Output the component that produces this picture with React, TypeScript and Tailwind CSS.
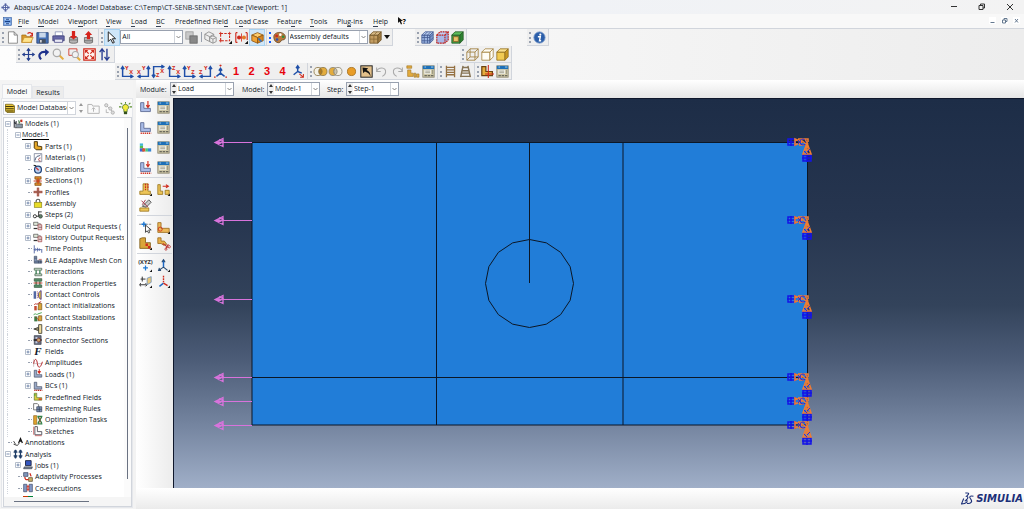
import type { ReactNode } from "react";
import clsx from "clsx";

const gold = "#e3ac3d";
const blue = "#1f4fa8";
const red = "#cf2a1c";

/* L-shaped bracket used by most of the part, load and BC icons */
const bracket = (fill = "#a9bbe6", stroke = "#55648f") => (
  <path d="M2 2h4v7h8v4H2z" fill={fill} stroke={stroke} strokeWidth="1" />
);

const axes = (a: string, b: string, path: string, ax: number, ay: number, bx: number, by: number) => (
  <>
    <path d={path} fill="none" stroke={blue} strokeWidth="1.8" />
    <text x={ax} y={ay} fontSize="7" fontWeight="700" fill={red}>{a}</text>
    <text x={bx} y={by} fontSize="7" fontWeight="700" fill={red}>{b}</text>
  </>
);

const upRight = "M2 2v12h12M0 5l2-3 2 3M11.500 12l3 2-3 2";
const upLeft = "M14 2v12H2M12 5l2-3 2 3M4.500 12l-3 2 3 2";
const downRight = "M2 15V2h12M0 12l2 3 2-3M11.500 0l3 2-3 2";

const cube = (front: string, top: string, side: string, stroke: string) => (
  <g stroke={stroke} strokeWidth="1" strokeLinejoin="round">
    <path d="M1 5h10v10H1z" fill={front} />
    <path d="M1 5l4-4h10l-4 4z" fill={top} />
    <path d="M11 5l4-4v10l-4 4z" fill={side} />
  </g>
);

const icons: Record<string, ReactNode> = {
  app: (
    <g fill="none" stroke="#4d5c9e" strokeWidth="1.600">
      <circle cx="8" cy="8" r="4.500" />
      <path d="M8 1v14M1 8h14" />
      <path d="M6 2h4M6 14h4M2 6v4M14 6v4" />
    </g>
  ),
  doc: (
    <>
      <rect x="1" y="1" width="14" height="14" fill="#6f9fe2" stroke="#2c559e" />
      <path d="M3 3h10v2H3zM3 7h10v2H3zM3 11h10v2H3z" fill="#fff" />
      <path d="M5 4h6M3 8h10M5 12h6" stroke="#173f86" strokeWidth="2" />
    </>
  ),
  file: <path d="M3 1h7l4 4v10H3zM10 1v4h4" fill="#fff" stroke="#777" />,
  open: (
    <>
      <path d="M1 14V5h5l1 2h6v7z" fill="#d9992b" stroke="#a9741a" />
      <path d="M1 14l3-6h11l-3 6z" fill="#ffe48c" stroke="#c79432" />
      <path d="M8 3c3-2 5-1 6 2M14 2v4h-3" fill="none" stroke={red} strokeWidth="1.500" />
    </>
  ),
  save: (
    <>
      <path d="M1 2h14v13H1z" fill="#4570b5" stroke="#2b4478" />
      <path d="M4 2h8v6H4z" fill="#c9d8ea" />
      <path d="M4 10h8v5H4z" fill="#444f60" />
      <path d="M5 11h2v3H5z" fill="#ddd" />
    </>
  ),
  print: (
    <>
      <path d="M4 1h9v5H4z" fill="#fff" stroke="#8890b5" />
      <path d="M1 6h14v6H1z" fill="#6768a8" stroke="#3f3f77" />
      <path d="M3 10h10v4H3z" fill="#e8e8f4" stroke="#55558e" />
    </>
  ),
  importDb: (
    <>
      <path d="M3 8h10v6c-2 1.500-8 1.500-10 0z" fill="#b5b5b5" stroke="#666" />
      <path d="M3 11h10" stroke="#666" />
      <path d="M6 0h4v6h2.500L8 10.500 3.500 6H6z" fill="#d6231b" />
    </>
  ),
  exportDb: (
    <>
      <path d="M3 8h10v6c-2 1.500-8 1.500-10 0z" fill="#b5b5b5" stroke="#666" />
      <path d="M3 12h10" stroke="#666" />
      <path d="M6 10h4V5h2.500L8 0 3.500 5H6z" fill="#d6231b" />
    </>
  ),
  cursor: <path d="M4 1v12l3-3 2.500 5 2-1L9 9.500h4z" fill="#fff" stroke="#222" strokeWidth="1.200" />,
  overlap: (
    <>
      <rect x="1" y="1" width="9" height="9" fill="#c9c9c9" stroke="#999" />
      <rect x="6" y="6" width="9" height="9" fill="#888" stroke="#666" />
    </>
  ),
  cubesGray: (
    <g fill="#eee" stroke="#888">
      <path d="M1 4l5-3 6 3v6l-5 3-6-3z" />
      <path d="M1 4l6 3 5-3M7 7v6" />
      <path d="M7 8l4-2 4 2v5l-4 2-4-2z" />
      <path d="M7 8l4 2 4-2M11 10v5" />
    </g>
  ),
  selectRect: (
    <>
      <path d="M2 3h11v9H2z" fill="none" stroke={red} strokeDasharray="3 1.500" strokeWidth="1.300" />
      <path d="M0 3h4M2 1v4M11 3h4M13 1v4M0 12h4M2 10v4" stroke={red} />
      <path d="M12 16h4v-4z" fill="#111" />
    </>
  ),
  selectDots: (
    <>
      <path d="M1 2v12M15 2v9M1 2h2M1 14h2M13 2h2" stroke={red} strokeWidth="1.400" />
      <circle cx="5" cy="8" r="2.500" fill={red} />
      <circle cx="11" cy="8" r="2.500" fill="#e37a28" />
      <path d="M8 3v10" stroke={red} />
      <path d="M12 16h4v-4z" fill="#111" />
    </>
  ),
  cubeOrange: (
    <g stroke="#8d5410">
      <path d="M1 5l7-3 7 3-7 3z" fill="#ffcb6a" />
      <path d="M1 5l7 3v7l-7-3z" fill="#f1a436" />
      <path d="M15 5L8 8v7l7-3z" fill="#d78620" />
      <path d="M9 9l4 4" stroke="#2d6fc4" strokeWidth="2" />
    </g>
  ),
  palette: (
    <>
      <path d="M1 7c0-4 5-6 9-5s6 4 5 7-4 1-5 3-2 3-5 2-4-4-4-7z" fill="#b97b3c" stroke="#6a431c" />
      <circle cx="4.500" cy="6" r="1.800" fill={red} />
      <circle cx="9" cy="4.500" r="1.600" fill="#fff" />
      <circle cx="12.500" cy="7" r="1.600" fill="#2f8c3a" />
      <circle cx="5" cy="10.500" r="1.600" fill="#2c51b5" />
    </>
  ),
  cubeBrown: (
    <>
      {cube("#c39d62", "#d8bb88", "#a17c42", "#6f5428")}
      <path d="M6 5v10M1 10h10l4-4M6 5l4-4" fill="none" stroke="#8a6a36" />
    </>
  ),
  cubeMesh: (
    <>
      {cube("#9eb7e2", "#bdd0f0", "#7d98cd", "#445b93")}
      <path d="M4 5v10M8 5v10M1 8h10l4-4M1 12h10l4-4M4 5l4-4M8 5l4-4" stroke="#445b93" fill="none" />
    </>
  ),
  cubeRed: (
    <>
      {cube("#a9b8e8", "#c3cdf0", "#98a8dc", "#98a8dc")}
      <path d="M1 5h10v10H1zM1 5l4-4h10v10l-4 4M11 5l4-4" fill="none" stroke={red} strokeWidth="1.500" strokeDasharray="2 1" />
    </>
  ),
  cubeGreen: (
    <>
      {cube("#3fa043", "#5bbd5b", "#2c8331", "#275c28")}
      <path d="M3 7h6v6H3z" fill="#e9c46a" stroke="#8b5d24" />
    </>
  ),
  info: (
    <>
      <circle cx="8" cy="8" r="7" fill="#2b5ea9" stroke="#8ea9d2" />
      <circle cx="9" cy="4.500" r="1.300" fill="#fff" />
      <path d="M6 7h3l-1 5h2" fill="none" stroke="#fff" strokeWidth="1.700" />
    </>
  ),
  move: (
    <path
      d="M8 1v14M1 8h14M6 3.500L8 1l2 2.500M6 12.500L8 15l2-2.500M3.500 6L1 8l2.500 2M12.500 6L15 8l-2.500 2"
      fill="none"
      stroke="#26408f"
      strokeWidth="1.500"
    />
  ),
  rotate: (
    <>
      <path d="M5 14C0 8 5 4 11 5" fill="none" stroke="#1e318c" strokeWidth="2.600" />
      <path d="M10 1l5 4-5 5z" fill="#1e318c" />
    </>
  ),
  zoom: (
    <>
      <path d="M9 9l5 5" stroke={gold} strokeWidth="2.500" />
      <circle cx="6" cy="6" r="4.500" fill="#f2f2f2" stroke="#aaa" strokeWidth="1.500" />
    </>
  ),
  zoomBox: (
    <>
      <path d="M1 1h10v8H1z" fill="none" stroke={red} />
      <path d="M11 11l4 4" stroke={gold} strokeWidth="2.500" />
      <circle cx="9" cy="8" r="3.800" fill="#f2f2f2" stroke="#aaa" strokeWidth="1.300" />
    </>
  ),
  fit: (
    <>
      <path d="M1 1h14v14H1z" fill="#fff3ee" stroke={red} strokeWidth="1.500" />
      <path d="M3 3l4 4M13 3L9 7M3 13l4-4M13 13L9 9" stroke={red} strokeWidth="1.500" />
      <path d="M2.500 2.500h4l-4 4zM13.500 2.500h-4l4 4zM2.500 13.500v-4l4 4zM13.500 13.500v-4l-4 4z" fill={red} />
    </>
  ),
  upDown: (
    <path d="M5 15V2M2 5l3-4 3 4M11 1v13M8 11l3 4 3-4" fill="none" stroke="#2a3f94" strokeWidth="1.700" />
  ),
  xy: axes("Y", "X", upRight, 5, 6, 10, 11),
  yx: axes("Y", "X", upLeft, 6, 6, 0, 11),
  xz: axes("X", "Z", downRight, 10, 10, 5, 15),
  zx: axes("Z", "X", upRight, 5, 6, 10, 11),
  yz: axes("Y", "Z", upRight, 5, 6, 10, 11),
  zy: axes("Y", "Z", upLeft, 6, 6, 0, 11),
  triad: (
    <>
      <path d="M8 4v6l-5 4M8 10l5 4M6 7l2-3 2 3" fill="none" stroke={blue} strokeWidth="1.800" />
      <path d="M7 0l1 1 1-1M0 15h2M14 15h2" stroke={red} strokeWidth="1.500" fill="none" />
    </>
  ),
  triadArrow: (
    <>
      <path d="M7 1v7l-5 4M7 8l5 2M5 4l2-3 2 3" fill="none" stroke={blue} strokeWidth="1.800" />
      <path d="M9 11l5 4M14 11v4h-4" fill="none" stroke={red} strokeWidth="1.300" />
    </>
  ),
  unionL: (
    <g stroke="#8a7444">
      <circle cx="5" cy="8" r="5" fill="#f4f1e6" />
      <circle cx="11" cy="8" r="5" fill={gold} />
      <path d="M8 4a5 5 0 010 8 5 5 0 010-8z" fill="#b07a1d" />
    </g>
  ),
  unionR: (
    <g stroke="#8a8474">
      <circle cx="5" cy="8" r="5" fill={gold} />
      <circle cx="11" cy="8" r="5" fill="#f4f1e6" />
      <path d="M8 4a5 5 0 010 8 5 5 0 010-8z" fill="#c9c3ae" />
    </g>
  ),
  disc: <circle cx="8" cy="8" r="5" fill="#e89d28" stroke="#a36b15" />,
  undoCut: (
    <>
      <rect x="1" y="1" width="14" height="14" fill="#e3c08a" stroke="#222" strokeWidth="1.200" />
      <path d="M3 3l7 1-2 2c3 1 5 4 5 8-2-4-4-5-7-6l-2 2z" fill="#111" />
    </>
  ),
  undo: <path d="M2 3v5h5M2 8c2-6 12-6 11 1 0 3-2 4-4 5" fill="none" stroke="#a9a9a9" strokeWidth="1.300" />,
  redo: <path d="M14 3v5H9M14 8C12 2 2 2 3 9c0 3 2 4 4 5" fill="none" stroke="#a9a9a9" strokeWidth="1.300" />,
  parts: (
    <g fill={gold} stroke="#9c6f1d" strokeWidth=".7">
      <path d="M1 1h6v3H1zM2 6h4v4h3v4H2z" />
      <path d="M10 10h2v5h-2zM13 11h3v4h-3z" />
    </g>
  ),
  manager: (
    <>
      <rect x="1" y="1" width="14" height="14" fill="#cfc8a8" stroke="#8d8770" />
      <path d="M1 1h14v4H1z" fill="#1d70b8" />
      <path d="M3 2.500h2M11 2.500h3" stroke="#bfe0f4" />
      <path d="M3 6h8v5H3z" fill="#f6f6ef" />
      <path d="M4 7.500h6M4 9.500h6M13 6v5" stroke="#8f8c7b" />
      <path d="M3 13h3M7 13h3M11 13h3" stroke="#6b6a5d" strokeWidth="1.500" />
    </>
  ),
  ladder: <path d="M3 1v14M13 1v14M3 3h10M3 6h10M3 9h10M3 12h10" stroke="#957142" strokeWidth="1.600" />,
  ladder2: <path d="M5 1L2 15M11 1l3 14M5 3h6M4 7h8M3 10h10M3 14h10" stroke="#867456" strokeWidth="1.800" />,
  bracketCut: (
    <>
      <path d="M1 2h5v6h8v5H1z" fill={gold} stroke="#6b4310" strokeWidth="1.500" />
      <path d="M9 0v16M5 11h11" stroke={red} strokeWidth="1.300" />
    </>
  ),
  cubeWire: (
    <g fill="none" stroke="#9c7a38">
      <path d="M1 5h10v10H1zM5 1h10v10H5zM1 5l4-4M11 5l4-4M11 15l4-4M1 15l4-4" />
    </g>
  ),
  cubeHidden: cube("#fffdf5", "#fffdf5", "#fffdf5", "#a4823f"),
  cubeShaded: cube("#f2cb52", "#f9df8c", "#c9971f", "#94701f"),
  database: (
    <>
      <path d="M2 3h9l3 2v9H4l-2-2z" fill="#e8c637" stroke="#6c5a12" />
      <path d="M2 6h11M2 9h11M3 12h10" stroke="#44380a" strokeWidth="1.500" />
    </>
  ),
  folderUp: (
    <path d="M1 3h5l1 2h8v9H1zM8 12V7M6 9l2-2 2 2" fill="none" stroke="#b5b5b5" strokeWidth="1.200" />
  ),
  linkNodes: (
    <g fill="#ddd" stroke="#aaa">
      <path d="M4 4l8 8M4 9v4h3" fill="none" />
      <circle cx="4" cy="4" r="2" />
      <circle cx="9" cy="8" r="2" />
      <circle cx="12" cy="13" r="2" />
    </g>
  ),
  bulb: (
    <>
      <path d="M8 0v2M0 6h3M16 6h-3M2 1l2 2M14 1l-2 2" stroke="#5b8f2f" strokeWidth="1.300" />
      <path d="M8 3a3.500 3.500 0 00-2 6.500V12h4V9.500A3.500 3.500 0 008 3z" fill="#f4ec40" stroke="#4d7226" />
      <path d="M6 12h4v3H6z" fill="#32501d" />
    </>
  ),
  load: (
    <>
      {bracket()}
      <path d="M11 0v8M9 5l2 3 2-3" fill="none" stroke={red} strokeWidth="1.400" />
    </>
  ),
  bc: (
    <>
      {bracket()}
      <path d="M2 15h13" stroke={red} strokeWidth="2" strokeDasharray="1.500 1" />
    </>
  ),
  field: (
    <>
      <path d="M1 3h4v3H1z" fill="#3fb6d6" />
      <path d="M1 6h4v3H1z" fill="#56c04d" />
      <path d="M1 9h5v4H1z" fill="#3f62d0" />
      <path d="M4 9h4v4H4z" fill="#d8572f" />
      <path d="M8 9h3v4H8z" fill="#46c77e" />
      <path d="M11 9h4v4h-4z" fill="#3886d0" />
    </>
  ),
  loadCase: (
    <>
      {bracket()}
      <path d="M11 0v7M9 4l2 3 2-3" fill="none" stroke={red} strokeWidth="1.400" />
      <path d="M2 15h13" stroke={red} strokeWidth="2" strokeDasharray="1.500 1" />
    </>
  ),
  stamp: (
    <>
      <path d="M5 1h6v9h3v4H1v-4h4z" fill="#ecc558" stroke="#9a751c" />
      <path d="M8 1v8M11 1v7" stroke={red} strokeWidth="1.500" strokeDasharray="2 1" />
      <path d="M13 16h3v-3z" fill="#111" />
    </>
  ),
  translate: (
    <>
      <path d="M1 2h3v8h3v4H1zM10 9h5v5h-5z" fill="#ecc558" stroke="#9a751c" />
      <path d="M7 4h7M11 2l3 2-3 2" fill="none" stroke={red} strokeWidth="1.400" />
      <path d="M13 16h3v-3z" fill="#111" />
    </>
  ),
  eraser: (
    <>
      <path d="M1 11h11v4H1z" fill="#ecc558" stroke="#9a751c" />
      <path d="M4 9l8-8 3 3-6 6z" fill="#c9c9c9" stroke="#444" />
      <path d="M3 2l8 8M8 1l-4 6" stroke="#a13b4a" strokeWidth="1.200" />
    </>
  ),
  datumPick: (
    <>
      <path d="M0 4h16" stroke="#777" strokeDasharray="3 1" />
      <path d="M6 1v6M3 4h6" stroke="#1c78d4" strokeWidth="1.700" />
      <path d="M8 5v9l2-2 2 3 1-1-1-3h3z" fill="#fff" stroke="#222" />
    </>
  ),
  elbow: (
    <>
      <path d="M1 2h4v7h10v5H1z" fill="#ecb95a" stroke="#9a6a1c" />
      <circle cx="4" cy="10" r="2.500" fill="none" stroke={red} />
      <path d="M13 16h3v-3z" fill="#111" />
    </>
  ),
  cells: (
    <>
      <path d="M1 2l3-1h4v6h6v7H1z" fill="#d9a53a" stroke="#7d5a17" />
      <path d="M8 8h3v3H8zM11 11h3v3h-3z" fill={red} />
      <path d="M13 16h3v-3z" fill="#111" />
    </>
  ),
  scissors: (
    <>
      <path d="M1 1h4v4h4l3 4-4 1-3-2H1z" fill="#e8b04a" stroke="#9a6a1c" />
      <path d="M7 8l7 5M11 14l3-5" stroke="#b33" strokeWidth="1.300" />
      <circle cx="15" cy="12" r="1.500" fill="none" stroke="#b33" />
      <circle cx="11" cy="15" r="1.300" fill="none" stroke="#b33" />
    </>
  ),
  xyz: (
    <>
      <text x="-1" y="6" fontSize="7" fontWeight="700" fill="#333">(XYZ)</text>
      <path d="M8 8v6M5 11h6" stroke="#1c78d4" strokeWidth="1.500" />
      <path d="M13 16h3v-3z" fill="#111" />
    </>
  ),
  csys: (
    <>
      <path d="M8 1v9" stroke="#1c68c4" strokeWidth="1.800" />
      <path d="M8 10l-6 4M8 10l5 4M3 11l-1 3h3M6 4l2-3 2 3" fill="none" stroke="#274a72" strokeWidth="1.400" />
      <path d="M13 16h3v-3z" fill="#111" />
    </>
  ),
  plane: (
    <>
      <path d="M2 5h6M4 2v6M1 12h8M2 10l-1 2 1 2M8 10l2 2-2 2" fill="none" stroke="#333" strokeWidth="1.200" />
      <path d="M10 4l5-2v7l-5 3z" fill="#ecc979" stroke="#6b8fb8" />
      <path d="M13 16h3v-3z" fill="#111" />
    </>
  ),
  csysRed: (
    <>
      <path d="M8 1v9" stroke={red} strokeWidth="1.700" strokeDasharray="2 1" />
      <path d="M8 10l-5 4" stroke="#1c68c4" strokeWidth="1.800" />
      <path d="M8 10l5 3" stroke={red} strokeWidth="1.700" />
      <path d="M13 16h3v-3z" fill="#111" />
    </>
  ),
  models: (
    <>
      <path d="M2 1v13M2 5l3 3M5 3v11" stroke="#30343c" strokeWidth="1.700" fill="none" />
      <path d="M7 8h8v6H3" fill="#8a98a5" stroke="#333" />
      <path d="M9 2l1 5 2-5" fill="none" stroke="#4a7a4c" strokeWidth="1.500" />
      <path d="M12 1h3v4h-3z" fill={red} />
    </>
  ),
  part: <path d="M2 1h5v7l7 1v5H5L2 11z" fill="#e8a928" stroke="#4a340b" strokeWidth="1.500" />,
  material: (
    <>
      <path d="M2 1v13h12M2 1h12v13" fill="#fff" stroke="#55617c" />
      <path d="M3 12C6 2 8 7 12 3" fill="none" stroke="#36476d" strokeWidth="1.500" />
      <path d="M12 8c-4 0-4 5 0 5" fill="none" stroke="#a33" strokeWidth="1.500" />
    </>
  ),
  calibration: (
    <>
      <circle cx="8" cy="9" r="5.500" fill="#bcd1ee" stroke="#20447a" strokeWidth="2" />
      <path d="M5 6l4 4" stroke="#c33" strokeWidth="2" />
      <path d="M1 2l4 1" stroke="#222" strokeWidth="2" />
    </>
  ),
  section: (
    <>
      <path d="M3 1h10v4h-3v6h3v4H3v-4h3V5H3z" fill="#d6912d" stroke="#7a3f0b" />
      <path d="M1 8h13M8 3v10" stroke="#c8321f" strokeWidth="1.500" />
    </>
  ),
  profile: (
    <>
      <path d="M6 1h4v14H6z" fill="#c56a5c" />
      <path d="M1 6h14v4H1z" fill="#c56a5c" />
      <path d="M8 1v14M1 8h14" stroke="#4a4038" strokeDasharray="2 1" />
    </>
  ),
  assembly: (
    <>
      <path d="M5 8V5a3 3 0 016 0v3" fill="none" stroke="#555" strokeWidth="1.800" />
      <rect x="2" y="7" width="12" height="8" fill="#e8dc28" stroke="#86801a" />
    </>
  ),
  step: (
    <>
      <circle cx="3" cy="10" r="2.500" fill="#fff" stroke="#333" strokeWidth="1.500" />
      <circle cx="12" cy="10" r="3" fill="#5d7f66" stroke="#333" />
      <path d="M5 10h4M9 2v8M9 3h5" stroke="#333" strokeWidth="1.500" />
    </>
  ),
  output: (
    <>
      <path d="M1 2h7v5H1z" fill="#dfe7d8" stroke="#444" />
      <path d="M1 12h6" stroke="#333" strokeWidth="2" />
      <path d="M8 6h6v8H8z" fill="#e8d0d0" stroke="#933" />
      <path d="M9 10h5M9 4l4 1" stroke="#533" />
    </>
  ),
  time: <path d="M2 2v13M14 8v6M2 9h11M4 7L2 9l2 2M7 6v6M10 7v4" fill="none" stroke="#4a5fa0" strokeWidth="1.400" />,
  ale: (
    <>
      {bracket("#7e92b5", "#39455c")}
      <path d="M2 5h4M2 11h12M9 9v4M12 9v4" stroke="#39455c" />
      <path d="M9 7h5" stroke="#b66" strokeWidth="1.500" />
    </>
  ),
  interaction: (
    <>
      <path d="M2 2h12v3H2zM3 11h11v3H3z" fill="#d9e8d9" stroke="#2e4b35" />
      <path d="M5 5v6M11 5v6" stroke="#30784a" strokeWidth="2" />
    </>
  ),
  interactionProp: (
    <>
      <path d="M2 1h12v4H2zM2 11h12v4H2z" fill="#57906a" stroke="#2e4b35" />
      <path d="M5 5v6M11 5v6" stroke="#30784a" strokeWidth="2" />
      <path d="M1 8h14" stroke="#bb2b20" strokeWidth="1.500" />
    </>
  ),
  contact: (
    <>
      <path d="M1 2h4v12H1z" fill="#5268a4" />
      <path d="M13 1c-6 2-6 12 0 14z" fill="#d8bc3b" stroke="#59408c" strokeWidth="1.500" />
      <path d="M7 2v12" stroke="#a44" strokeDasharray="2 1" />
    </>
  ),
  contactInit: (
    <>
      <path d="M9 4h5v10H8z" fill="#d9a436" stroke="#704c12" />
      <path d="M2 8h4v7H2z" fill="#c34a33" />
      <path d="M2 6c3-4 4 2 7-3l4-2" fill="none" stroke="#b5281c" strokeWidth="1.500" />
    </>
  ),
  contactStab: (
    <>
      <path d="M9 6h5v8H8z" fill="#d9a436" stroke="#704c12" />
      <path d="M2 7h5v8H2z" fill="#3d7a45" />
      <path d="M1 5c3-5 4 1 7-2l6-2" fill="none" stroke="#43a14e" strokeWidth="1.500" />
      <path d="M4 8l6 5" stroke={red} />
    </>
  ),
  constraint: (
    <>
      <path d="M14 1v14H9V11L2 8l7-3V1z" fill="#f0dc9a" stroke="#3a3a30" strokeWidth="1.300" />
      <path d="M1 8h8M9 5v6" stroke="#333" strokeWidth="1.500" />
    </>
  ),
  connector: (
    <>
      <path d="M2 1h11v14H2z" fill="#6a7080" stroke="#2d3140" />
      <path d="M1 8h13" stroke="#111" strokeWidth="2" />
      <circle cx="9" cy="8" r="3" fill="#c9a46a" stroke="#7b2420" />
      <path d="M4 3h3v3H4zM4 10h3v3H4z" fill="#c2cbe0" />
    </>
  ),
  amplitude: (
    <>
      <path d="M1 2v12M1 9h14" stroke="#b9a0a0" />
      <path d="M1 9c2-10 5-8 6 0s5 8 8-3" fill="none" stroke="#b52a30" strokeWidth="1.600" />
    </>
  ),
  treeLoad: (
    <>
      {bracket("#9aa9c8", "#3c455c")}
      <path d="M10 0v7M8 4l2 3 2-3z" fill={red} stroke={red} strokeWidth="1.500" />
    </>
  ),
  treeBc: (
    <>
      {bracket("#9aa9c8", "#3c455c")}
      <path d="M2 15h13" stroke="#b92b22" strokeWidth="2" strokeDasharray="2 1" />
    </>
  ),
  predefined: (
    <>
      {bracket("#d9cf3f", "#4f6a2b")}
      <path d="M2 3h2v3H2z" fill="#4ba23f" />
      <path d="M9 10h5v3H9z" fill="#d0502d" />
    </>
  ),
  remesh: (
    <>
      <path d="M1 1h6l2 2v8H1z" fill="#fff" stroke="#333" />
      <path d="M6 6h8v8H6z" fill="#7f96b8" stroke="#26324a" />
      <path d="M10 6v8M6 10h8" stroke="#26324a" />
    </>
  ),
  optimize: (
    <>
      <path d="M1 1h5v14H1z" fill="#e0a32d" stroke="#8a611b" />
      <path d="M7 2h8M7 14h8M8 3l6 10M14 3L8 13" stroke="#2f8148" strokeWidth="2" />
      <path d="M11 3v10" stroke={red} />
    </>
  ),
  sketch: (
    <>
      <path d="M3 1h4v8h7v5H3z" fill="#fff" stroke="#4b4a55" strokeWidth="1.400" />
      <path d="M1 1v13M3 15.500h11" stroke="#b33" />
    </>
  ),
  annotation: (
    <>
      <path d="M1 5l3 5M1 10l6 2 3-4" fill="none" stroke="#222" strokeWidth="1.300" />
      <path d="M9 8l3-7 3 7M10 5h4" fill="none" stroke="#111" strokeWidth="2" />
    </>
  ),
  analysis: (
    <path
      d="M4 1v14M12 1v14M1 5h6M1 11h6M9 5h6M9 11h6M2 3l4 0M10 3h4M2 13h4M10 13h4"
      stroke="#1e3c66"
      strokeWidth="2"
    />
  ),
  job: (
    <>
      <path d="M4 1h9v8H4z" fill="#3456c0" stroke="#222a45" strokeWidth="1.500" />
      <path d="M2 11h13l-1 3H1z" fill="#7b8798" stroke="#2c3240" />
    </>
  ),
  adaptivity: (
    <>
      <path d="M1 1h7v6H1z" fill="#8197bb" stroke="#2a3550" />
      <path d="M9 9h6v6H9z" fill="#c9b06a" stroke="#4a3b1a" />
      <path d="M3 8c0 4 2 5 6 4M11 2l2 5" fill="none" stroke={red} strokeWidth="2" />
    </>
  ),
  coexec: (
    <>
      <path d="M1 2h5v12H1zM10 2h5v12h-5z" fill="#8297c4" stroke="#33405f" />
      <path d="M6 6h4M6 10h4M8 3v10" stroke={red} strokeWidth="1.500" />
    </>
  ),
};

function Icon({ name, className = "size-[14px]" }: { name: string; className?: string }) {
  return (
    <svg viewBox="0 0 16 16" className={clsx("shrink-0 overflow-visible", className)} aria-hidden="true">
      {icons[name]}
    </svg>
  );
}

function IconButton({ name, active, className }: { name: string; active?: boolean; className?: string }) {
  return (
    <button
      type="button"
      aria-label={name}
      className={clsx(
        "flex h-[15px] w-[14px] shrink-0 items-center justify-center",
        active && "bg-[#cfe6f8] outline outline-[#a9d2f0]",
        className
      )}
    >
      <Icon name={name} className="size-[13px]" />
    </button>
  );
}

function Grip({ color = "border-gray-400" }: { color?: string }) {
  return <span className={clsx("h-[11px] shrink-0 border-l-2 border-dotted", color)} />;
}

function Group({ className, children }: { className: string; children: ReactNode }) {
  return (
    <div className={clsx("flex h-full shrink-0 items-center justify-between border-r border-b border-gray-300 bg-[#efefef] px-[2px]", className)}>
      {children}
    </div>
  );
}

function Spinner({ fill }: { fill: string }) {
  return (
    <svg viewBox="0 0 6 12" className="h-3 w-[6px] shrink-0" aria-hidden="true">
      <path d="M1 4l2-3 2 3zM1 8l2 3 2-3z" fill={fill} />
    </svg>
  );
}

type ComboProps = { label: string; value: string; className: string; spinner?: boolean };

function Combo({ label, value, className, spinner }: ComboProps) {
  return (
    <span className={clsx("relative flex shrink-0 items-center bg-white", className)}>
      {spinner && (
        <span className="flex shrink-0 bg-[#f0f0f0]">
          <Spinner fill="#333" />
        </span>
      )}
      <select aria-label={label} className="h-3 w-full min-w-0 appearance-none bg-transparent pr-[7px] pl-px leading-3 text-clip outline-none">
        <option>{value}</option>
      </select>
      <svg viewBox="0 0 8 12" className="pointer-events-none absolute top-0 right-0 h-3 w-2">
        <path d="M.5 0v12" stroke="#d1d5db" />
        <path d="M2.500 5l2 2 2-2" fill="none" stroke="#666" strokeWidth=".8" />
      </svg>
    </span>
  );
}

type MenuItem = { pre?: string; key: string; post: string; width: string };

const menuItems: MenuItem[] = [
  { key: "F", post: "ile", width: "w-[20px]" },
  { key: "M", post: "odel", width: "w-[30px]" },
  { pre: "Vie", key: "w", post: "port", width: "w-[38px]" },
  { key: "V", post: "iew", width: "w-[25px]" },
  { key: "L", post: "oad", width: "w-[25px]" },
  { key: "B", post: "C", width: "w-[19px]" },
  { pre: "Predefined Fiel", key: "d", post: "", width: "w-[60px]" },
  { pre: "L", key: "o", post: "ad Case", width: "w-[42px]" },
  { pre: "Feat", key: "u", post: "re", width: "w-[33px]" },
  { key: "T", post: "ools", width: "w-[27px]" },
  { pre: "Plu", key: "g", post: "-ins", width: "w-[36px]" },
  { key: "H", post: "elp", width: "w-[25px]" },
];

type TreeNode = { label: string; level: 0 | 1 | 2; icon?: string; box?: "+" | "-"; current?: boolean };

const tree: TreeNode[] = [
  { label: "Models (1)", level: 0, icon: "models", box: "-" },
  { label: "Model-1", level: 1, box: "-", current: true },
  { label: "Parts (1)", level: 2, icon: "part", box: "+" },
  { label: "Materials (1)", level: 2, icon: "material", box: "+" },
  { label: "Calibrations", level: 2, icon: "calibration" },
  { label: "Sections (1)", level: 2, icon: "section", box: "+" },
  { label: "Profiles", level: 2, icon: "profile" },
  { label: "Assembly", level: 2, icon: "assembly", box: "+" },
  { label: "Steps (2)", level: 2, icon: "step", box: "+" },
  { label: "Field Output Requests (", level: 2, icon: "output", box: "+" },
  { label: "History Output Requests", level: 2, icon: "output", box: "+" },
  { label: "Time Points", level: 2, icon: "time" },
  { label: "ALE Adaptive Mesh Con", level: 2, icon: "ale" },
  { label: "Interactions", level: 2, icon: "interaction" },
  { label: "Interaction Properties", level: 2, icon: "interactionProp" },
  { label: "Contact Controls", level: 2, icon: "contact" },
  { label: "Contact Initializations", level: 2, icon: "contactInit" },
  { label: "Contact Stabilizations", level: 2, icon: "contactStab" },
  { label: "Constraints", level: 2, icon: "constraint" },
  { label: "Connector Sections", level: 2, icon: "connector" },
  { label: "Fields", level: 2, icon: "fields", box: "+" },
  { label: "Amplitudes", level: 2, icon: "amplitude" },
  { label: "Loads (1)", level: 2, icon: "treeLoad", box: "+" },
  { label: "BCs (1)", level: 2, icon: "treeBc", box: "+" },
  { label: "Predefined Fields", level: 2, icon: "predefined" },
  { label: "Remeshing Rules", level: 2, icon: "remesh" },
  { label: "Optimization Tasks", level: 2, icon: "optimize" },
  { label: "Sketches", level: 2, icon: "sketch" },
  { label: "Annotations", level: 0, icon: "annotation" },
  { label: "Analysis", level: 0, icon: "analysis", box: "-" },
  { label: "Jobs (1)", level: 1, icon: "job", box: "+" },
  { label: "Adaptivity Processes", level: 1, icon: "adaptivity" },
  { label: "Co-executions", level: 1, icon: "coexec" },
];

function TreeRow({ node }: { node: TreeNode }) {
  return (
    <li className="flex min-h-0 flex-1 items-center whitespace-nowrap">
      {node.level > 0 && <span className="ml-[3px] w-[7px] shrink-0 self-stretch border-l border-dotted border-gray-300" />}
      {node.level > 1 && <span className="w-[10px] shrink-0 self-stretch" />}
      <span className="flex w-2 shrink-0 items-center justify-center">
        {node.box ? (
          <svg viewBox="0 0 6 6" className="size-[6px]">
            <path d="M.5.5h5v5h-5z" fill="#fff" stroke="#b4bdca" />
            <path d={node.box === "+" ? "M1.500 3h3M3 1.500v3" : "M1.500 3h3"} stroke="#5a74a0" strokeWidth=".8" />
          </svg>
        ) : (
          <span className="ml-1 w-1 border-t border-dotted border-gray-400" />
        )}
      </span>
      {node.icon === "fields" ? (
        <span className="w-3 shrink-0 text-center font-['Liberation_Serif',serif] text-[11px] leading-none font-bold italic">F</span>
      ) : (
        node.icon && <Icon name={node.icon} className="mx-px size-[10px]" />
      )}
      <span className={clsx("leading-[9px]", node.current ? "border-b border-black" : "pl-px")}>{node.label}</span>
    </li>
  );
}

function ModelTree() {
  return (
    <aside className="flex w-[133px] shrink-0 flex-col bg-[#f4f4f4] pt-1">
      <div className="flex h-[14px] shrink-0 items-end pl-[2px]" role="tablist">
        <button type="button" role="tab" aria-selected="true" className="h-full w-[30px] border border-b-0 border-gray-200 bg-[#fafafa]">
          Model
        </button>
        <button type="button" role="tab" aria-selected="false" className="h-3 w-[32px] border border-b-0 border-gray-200 bg-[#ececec]">
          Results
        </button>
      </div>
      <div className="mb-px ml-px flex min-h-0 flex-1 flex-col border border-gray-200 bg-[#fafafa] pl-px">
        <div className="flex h-[18px] shrink-0 items-center justify-between">
          <span className="flex items-center border border-gray-300 bg-white">
            <Icon name="database" className="size-3" />
            <Combo label="Database" value="Model Database" className="w-[59px]" />
          </span>
          <Spinner fill="#999" />
          <IconButton name="folderUp" />
          <IconButton name="linkNodes" />
          <IconButton name="bulb" />
        </div>
        <div className="flex min-h-0 flex-1 flex-col border border-gray-300 bg-white">
          <div className="flex min-h-0 flex-1">
            <div className="flex min-w-0 flex-1 flex-col overflow-hidden">
              <ul className="flex min-h-0 flex-1 flex-col">
                {tree.map((node) => (
                  <TreeRow key={node.label} node={node} />
                ))}
              </ul>
              <div className="ml-[19px] flex h-[3px] w-[10px] shrink-0 items-end">
                <span className="h-px flex-1 bg-orange-700" />
                <span className="h-px flex-1 bg-green-700" />
              </div>
            </div>
            <div className="flex w-[7px] shrink-0 justify-center bg-[#fbfbfb] pt-[10px] pb-[18px]">
              <span className="w-px bg-gray-500" />
            </div>
          </div>
          <div className="flex h-[9px] shrink-0 items-center bg-[#f5f5f5] pl-[10px]">
            <span className="h-px w-[75px] bg-gray-500" />
          </div>
        </div>
      </div>
    </aside>
  );
}

const toolbox = [
  ["load", "manager", "bc", "manager", "field", "manager", "loadCase", "manager"],
  ["stamp", "translate", "eraser"],
  ["datumPick", "elbow", "cells", "scissors"],
  ["xyz", "csys", "plane", "csysRed"],
];

function Toolbox() {
  return (
    <div className="flex w-[37px] shrink-0 flex-col bg-linear-to-r from-white to-[#ececec]">
      {toolbox.map((group, i) => (
        <div
          key={i}
          className={clsx(
            "mx-px grid grid-cols-2 justify-items-center border-b border-gray-300 last:border-b-0",
            i === 0 ? "gap-y-[5px] pt-[2px] pb-[2px]" : "gap-y-px pt-1 pb-[2px]"
          )}
        >
          {group.map((name, j) => (
            <IconButton key={j} name={name} />
          ))}
        </div>
      ))}
    </div>
  );
}

const loadRows = [142, 220, 299, 377, 401, 425];

const hole = Array.from({ length: 16 }, (_, i) => {
  const a = (i * Math.PI) / 8;
  return `${529.5 + 44 * Math.sin(a)},${283.5 - 44 * Math.cos(a)}`;
}).join(" ");

function BcSymbol({ y }: { y: number }) {
  return (
    <g transform={`translate(807 ${y})`} fill="none">
      <g stroke="#1414e6" strokeWidth="1.500">
        <path d="M-19-3h7v6h-7zM-20 0h9M-16-4v8" />
        <path d="M-4 13h8v6h-8zM-5 16h10M0 12v8" fill="#1414e6" fillOpacity=".4" />
      </g>
      <g stroke="#ee7c34" strokeWidth="1.600">
        <path d="M-12-3l7 3-7 3zM-9-3h10v3M-8 3h5" />
        <path d="M0 1l4 11h-8zM0 1v11M-3 8h6" />
      </g>
      <g stroke="#2a2ad8">
        <circle cx="-4" cy="0" r="3" />
        <path d="M-9-2l3 4M-9 2l3-4M-3 9l3 3M3 7l-3 3" />
      </g>
      <path d="M-6-2l5 4M-2-3l3 5" stroke="#ee7c34" strokeWidth="1.300" />
    </g>
  );
}

function Viewport() {
  return (
    <div className="min-h-0 min-w-0 flex-1 border-t border-l border-slate-900 bg-[linear-gradient(#1d2d47_0%,#26354f_30%,#33435b_53%,#4c5c77_67%,#7585a0_84%,#a0afc8_100%)]">
      <svg viewBox="174 99 850 388" preserveAspectRatio="xMinYMin meet" className="block size-full">
        <rect x="252" y="142" width="555.500" height="283" fill="#217dd8" />
        <g fill="none" stroke="#0c1726" strokeWidth="1">
          <path d="M252 142.500h555.500v282.500H252zM436.500 142v283M623 142v283M252 377.500h555M529.500 142v141" />
          <polygon points={hole} />
        </g>
        {loadRows.map((y) => (
          <g key={y} transform={`translate(215 ${y})`} fill="none" stroke="#d873dc">
            <path d="M8 .5h29" />
            <path d="M0 .5l8-4v8zM0 .5h8M4-1v3l4-2.500-4-2" strokeWidth="1.300" />
          </g>
        ))}
        {loadRows.map((y) => (
          <BcSymbol key={y} y={y} />
        ))}
      </svg>
    </div>
  );
}

function Toolbars() {
  return (
    <div className="shrink-0 border-t border-gray-300 bg-linear-to-r from-[#fdfdfd] via-[#f6f6f6] to-[#ededed]">
      <div className="flex h-[17px]">
        <Group className="w-[99px]">
          <Grip />
          {["file", "open", "save", "print", "importDb", "exportDb"].map((n) => (
            <IconButton key={n} name={n} />
          ))}
        </Group>
        <Group className="w-[168px]">
          <Grip />
          <IconButton name="cursor" active />
          <Combo label="Selection filter" value="All" className="w-[63px] border border-gray-400" />
          <IconButton name="overlap" className="w-[10px]" />
          <span className="h-[10px] w-px bg-gray-400" />
          <IconButton name="cubesGray" />
          <IconButton name="selectRect" />
          <IconButton name="selectDots" />
          <IconButton name="cubeOrange" active />
        </Group>
        <Group className="w-[126px]">
          <Grip color="border-blue-600" />
          <IconButton name="palette" />
          <Combo label="Color code" value="Assembly defaults" className="w-[80px] border border-gray-400" />
          <IconButton name="cubeBrown" />
          <svg viewBox="0 0 6 4" className="h-1 w-[6px]">
            <path d="M0 0h6L3 4z" fill="#111" />
          </svg>
        </Group>
        <Group className="ml-[22px] w-[52px]">
          <Grip />
          {["cubeMesh", "cubeRed", "cubeGreen"].map((n) => (
            <IconButton key={n} name={n} />
          ))}
        </Group>
        <Group className="ml-[60px] w-[22px]">
          <Grip />
          <IconButton name="info" />
        </Group>
      </div>
      <div className="flex h-[17px]">
        <Group className="ml-4 w-[99px]">
          <Grip />
          {["move", "rotate", "zoom", "zoomBox", "fit", "upDown"].map((n) => (
            <IconButton key={n} name={n} />
          ))}
        </Group>
        <Group className="ml-[345px] w-[52px]">
          <Grip />
          {["cubeWire", "cubeHidden", "cubeShaded"].map((n) => (
            <IconButton key={n} name={n} />
          ))}
        </Group>
      </div>
      <div className="flex h-[17px]">
        <Group className="ml-[115px] w-[193px]">
          <Grip />
          {["xy", "yx", "xz", "zx", "yz", "zy", "triad"].map((n) => (
            <IconButton key={n} name={n} />
          ))}
          {[1, 2, 3, 4].map((n) => (
            <button key={n} type="button" className="w-[14px] font-['Liberation_Sans',sans-serif] text-[11px] leading-none font-bold text-red-600">
              {n}
            </button>
          ))}
          <IconButton name="triadArrow" />
        </Group>
        <Group className="w-[130px]">
          <Grip />
          {["unionL", "unionR", "disc", "undoCut", "undo", "redo", "parts", "manager"].map((n) => (
            <IconButton key={n} name={n} />
          ))}
        </Group>
        <Group className="w-[37px]">
          <Grip />
          <IconButton name="ladder" />
          <IconButton name="ladder2" />
        </Group>
        <Group className="w-[37px]">
          <Grip />
          <IconButton name="bracketCut" />
          <IconButton name="manager" />
        </Group>
      </div>
    </div>
  );
}

export default function App() {
  return (
    <div className="flex h-screen flex-col overflow-hidden bg-[#f3f3f3] font-['Open_Sans','Noto_Sans',sans-serif] text-[7px] leading-none text-gray-900">
      <header className="flex h-[14px] shrink-0 items-center bg-linear-to-r from-[#ecf1fa] to-[#f3f3f3] pl-px">
        <Icon name="app" className="size-[9px]" />
        <h1 className="ml-1 flex-1 whitespace-nowrap">
          {"Abaqus/CAE 2024 - Model Database: C:\\Temp\\CT-SENB-SENT\\SENT.cae [Viewport: 1]"}
        </h1>
        <svg viewBox="0 0 76 14" className="h-[14px] w-[76px]" fill="none" stroke="#333">
          <path d="M3 6.500h6" />
          <path d="M31 5.500h4v4h-4zM32.500 5.500V4h4v4H35" />
          <path d="M59 4l6 6M65 4l-6 6" />
        </svg>
      </header>
      <nav className="flex h-[14px] shrink-0 items-center bg-[#f8f8f8] pl-[3px]">
        <Icon name="doc" className="mr-[6px] size-[9px]" />
        {menuItems.map((m) => (
          <button key={m.pre ?? m.post} type="button" className={clsx("shrink-0 text-left whitespace-nowrap", m.width)}>
            {m.pre}
            <span className="border-b border-gray-700">{m.key}</span>
            {m.post}
          </button>
        ))}
        <svg viewBox="0 0 8 8" className="h-2 w-2 overflow-visible">
          <path d="M0 0v6l1.500-1.500L3 7.500l1-.5-1-3h2z" fill="#111" />
          <text x="4.500" y="6.500" fontSize="7" fontWeight="700">?</text>
        </svg>
        <svg viewBox="0 0 36 10" className="mr-[1px] ml-auto h-[10px] w-[36px]">
          <path d="M2 1h7v7H2zM14 1h7v7h-7zM26 1h7v7h-7z" fill="#fff" />
          <path d="M3.500 6.500h4M15.500 4h3v3h-3zM17 4V2.500h3v3h-1.500M28 3l3 3.500M31 3l-3 3.500" fill="none" stroke="#64788f" />
        </svg>
      </nav>
      <Toolbars />
      <div className="flex min-h-0 flex-1">
        <ModelTree />
        <main className="ml-[3px] flex min-w-0 flex-1 flex-col">
          <div className="flex h-[18px] shrink-0 items-center gap-[3px] bg-linear-to-b from-white to-[#e6e6e6] pl-1">
            <span className="w-[27px]">Module:</span>
            <Combo label="Module" value="Load" className="w-[64px] border border-gray-400" spinner />
            <span className="ml-[5px] w-[22px]">Model:</span>
            <Combo label="Model" value="Model-1" className="w-[53px] border border-gray-400" spinner />
            <span className="ml-1 w-4">Step:</span>
            <Combo label="Step" value="Step-1" className="w-[53px] border border-gray-400" spinner />
          </div>
          <div className="flex min-h-0 flex-1">
            <Toolbox />
            <Viewport />
          </div>
          <footer className="flex h-[21px] shrink-0 items-center justify-end gap-[2px] bg-linear-to-b from-white to-[#ebebeb] pr-px text-[#1b2f78]">
            <svg viewBox="0 0 24 24" className="size-[13px]" fill="none" stroke="currentColor" strokeWidth="2">
              <path d="M8 2c8-1 8 1 2 6 5 1 2 6-3 9" />
              <path d="M5 12l-4 10c9 0 13-5 8-8" />
              <path d="M23 8c-6-2-9 1-5 5 4 5 0 9-7 8" />
            </svg>
            <span className="font-['DejaVu_Sans',sans-serif] text-[10px] font-bold italic">SIMULIA</span>
          </footer>
        </main>
      </div>
    </div>
  );
}
